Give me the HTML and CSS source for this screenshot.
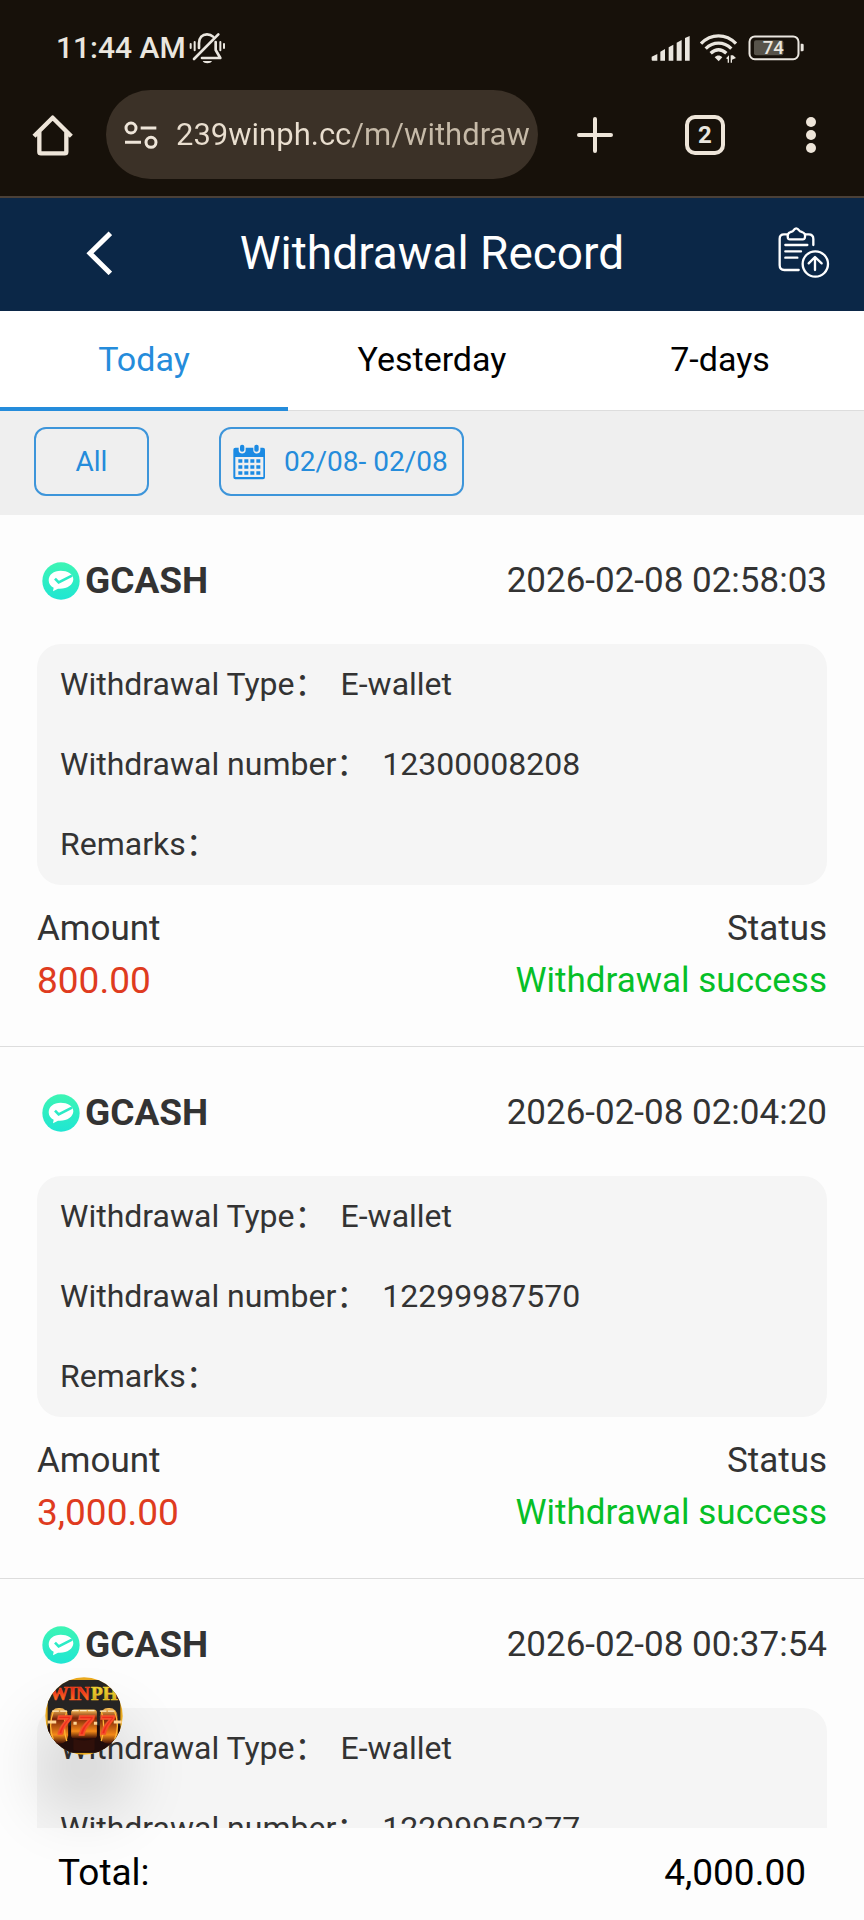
FILE: index.html
```html
<!DOCTYPE html>
<html lang="en">
<head>
<meta charset="utf-8">
<meta name="viewport" content="width=device-width, initial-scale=1">
<title>Withdrawal Record</title>
<link rel="stylesheet" href="styles.css">
</head>
<body class="app">
<svg class="defs" width="0" height="0" aria-hidden="true">
  <defs>
    <linearGradient id="mint" x1="0" y1="0" x2="0" y2="1"><stop offset="0" stop-color="#3df5b4"/><stop offset="1" stop-color="#1fe6d3"/></linearGradient>
    <symbol id="gcash" viewBox="0 0 114 114">
      <circle cx="57" cy="57" r="56" fill="url(#mint)"/>
      <path d="M56 26C35 26 20 38 20 55c0 11 6 18 15 22l-2 11 15-8c26 2 45-10 46-28 0-16-18-26-38-26z" fill="#fff"/>
      <path d="M39 50l11 11 40-20" fill="none" stroke="#2bebc6" stroke-width="8"/>
    </symbol>
  </defs>
</svg>

<div class="chrome">
  <div class="status">
    <span class="clock">11:44 AM</span>
    <svg class="bell" viewBox="564 94 114 96" width="38" height="32" fill="none" stroke="#eae6df" stroke-width="8" stroke-linecap="round" stroke-linejoin="round" aria-hidden="true">
      <path d="M597 142v-14c0-17 10-27 24-27 8 0 14 3 18 7M647 124v24l14 24H606M655 101l-73 74"/>
      <path d="M572 130v12M584 124v25M661 124v25M672 130v12" stroke-width="6"/>
      <path d="M608 181h28c-4 9-24 9-28 0z" fill="#eae6df" stroke="none"/>
    </svg>
    <svg class="signal" viewBox="654 100 120 84" width="40" height="28" fill="#eae6df" aria-hidden="true">
      <path d="M656 168l17-8v20h-14q-3 0-3-3zM682 153l14-8v35h-14zM707 140l14-8v48h-14zM731 126l15-8v62h-15zM756 112l14-6v74h-14z"/>
    </svg>
    <svg class="wifi" viewBox="798 97 117 93" width="39" height="31" fill="none" stroke="#eae6df" stroke-width="10" aria-hidden="true">
      <path d="M804 129c30-31 75-31 105 0M818 144c23-22 54-22 77 0M833 158c15-14 32-14 47 0"/>
      <path d="M845 170c7-7 16-7 23 0l-11 12z" fill="#eae6df" stroke="none"/>
      <path d="M879 173l9-9v22h-4v-10zM893 164v22h4v-9l12-5-9-8z" fill="#eae6df" stroke="none"/>
    </svg>
    <svg class="battery" viewBox="946 103 168 78" width="56" height="26" aria-hidden="true">
      <rect x="950.500" y="107.500" width="147" height="68" rx="16" fill="none" stroke="#eae6df" stroke-width="6"/>
      <rect x="964" y="119" width="88" height="45" rx="6" fill="#57534a"/>
      <path d="M1104 129h5q4 0 4 4v15q0 4-4 4h-5z" fill="#eae6df"/>
      <text x="1022" y="161" text-anchor="middle" class="battery-text">74</text>
    </svg>
  </div>
  <div class="toolbar">
    <button class="tool tool-home" aria-label="Home">
      <svg viewBox="96 340 126 126" width="42" height="42" fill="none" stroke="#eee5d9" stroke-width="13" stroke-linejoin="round" aria-hidden="true">
        <path d="M102 407l56-56 56 56M118 394v59q0 5 5 5h71q5 0 5-5v-59"/>
      </svg>
    </button>
    <label class="address">
      <svg viewBox="372 358 102 90" width="34" height="30" fill="none" stroke="#eee5d9" stroke-width="9" aria-hidden="true">
        <circle cx="393" cy="382" r="15"/><path d="M422 382h47M375 425h48"/><circle cx="453" cy="425" r="15"/>
      </svg>
      <input class="url" type="text" aria-label="Address" value="239winph.cc/m/withdraw">
    </label>
    <button class="tool tool-add" aria-label="New tab">
      <svg viewBox="0 0 36 36" width="36" height="36" stroke="#eee5d9" stroke-width="4" stroke-linecap="round" aria-hidden="true"><path d="M18 2v32M2 18h32"/></svg>
    </button>
    <button class="tool tool-tabs" aria-label="Open tabs"><span class="tab-count">2</span></button>
    <button class="tool tool-menu" aria-label="Menu">
      <svg viewBox="0 0 10 36" width="10" height="36" fill="#eee5d9" aria-hidden="true"><circle cx="5" cy="5" r="5"/><circle cx="5" cy="18" r="5"/><circle cx="5" cy="31" r="5"/></svg>
    </button>
  </div>
</div>

<header class="header">
  <button class="header-back" aria-label="Back">
    <svg viewBox="258 120 78 132" width="26" height="44" fill="none" stroke="#fff" stroke-width="15" aria-hidden="true"><path d="M331 127l-61 60 61 60"/></svg>
  </button>
  <h1 class="title">Withdrawal Record</h1>
  <button class="header-action" aria-label="Export record">
    <svg viewBox="1038 114 156 156" width="52" height="52" fill="none" stroke="#fff" stroke-width="7" stroke-linecap="round" stroke-linejoin="round" aria-hidden="true">
      <path d="M1064 136h-8q-13 0-13 13v80q0 14 14 14h43M1120 136h10q14 0 14 14v18"/>
      <path d="M1068 148q-4-15 8-19 7-1 8-4 8-14 18 0 1 3 8 4 13 4 8 19-1 3-5 3h-40q-4 0-5-3z"/>
      <path d="M1060 168h66M1060 187h47M1060 206h36"/>
      <circle cx="1150" cy="225" r="38"/>
      <path d="M1149 243v-37M1130 223l19-19 20 19"/>
    </svg>
  </button>
</header>

<nav class="tabs">
  <button class="tab tab-active">Today</button>
  <button class="tab">Yesterday</button>
  <button class="tab">7-days</button>
</nav>

<div class="filters">
  <button class="filter filter-all">All</button>
  <button class="filter filter-date">
    <svg viewBox="699 760 99 108" width="33" height="36" aria-hidden="true">
      <path fill="#1b8ae3" fill-rule="evenodd" d="M706 771h10v8c0 13 21 13 21 0v-8h23v8c0 13 21 13 21 0v-8h8q6 0 6 6v83q0 6-6 6h-83q-6 0-6-6v-83q0-6 6-6zM706 799v60h84v-60z"/>
      <rect x="720" y="762" width="13" height="21" rx="6" fill="#1b8ae3"/><rect x="763" y="762" width="13" height="21" rx="6" fill="#1b8ae3"/>
      <path d="M715 811h66M715 829h66M715 847h66" stroke="#1b8ae3" stroke-width="11" stroke-dasharray="12 6"/>
    </svg>
    <span>02/08- 02/08</span>
  </button>
</div>

<main class="list">
  <article class="record">
    <div class="record-head">
      <svg width="38" height="38" aria-hidden="true"><use href="#gcash"/></svg>
      <h2 class="wallet">GCASH</h2>
      <time class="date">2026-02-08 02:58:03</time>
    </div>
    <dl class="details">
      <div class="detail"><dt>Withdrawal Type：</dt><dd>E-wallet</dd></div>
      <div class="detail"><dt>Withdrawal number：</dt><dd>12300008208</dd></div>
      <div class="detail"><dt>Remarks：</dt><dd></dd></div>
    </dl>
    <div class="summary">
      <div class="summary-col"><span>Amount</span><span class="amount">800.00</span></div>
      <div class="summary-col summary-end"><span>Status</span><span class="success">Withdrawal success</span></div>
    </div>
  </article>
  <article class="record">
    <div class="record-head">
      <svg width="38" height="38" aria-hidden="true"><use href="#gcash"/></svg>
      <h2 class="wallet">GCASH</h2>
      <time class="date">2026-02-08 02:04:20</time>
    </div>
    <dl class="details">
      <div class="detail"><dt>Withdrawal Type：</dt><dd>E-wallet</dd></div>
      <div class="detail"><dt>Withdrawal number：</dt><dd>12299987570</dd></div>
      <div class="detail"><dt>Remarks：</dt><dd></dd></div>
    </dl>
    <div class="summary">
      <div class="summary-col"><span>Amount</span><span class="amount">3,000.00</span></div>
      <div class="summary-col summary-end"><span>Status</span><span class="success">Withdrawal success</span></div>
    </div>
  </article>
  <article class="record">
    <div class="record-head">
      <svg width="38" height="38" aria-hidden="true"><use href="#gcash"/></svg>
      <h2 class="wallet">GCASH</h2>
      <time class="date">2026-02-08 00:37:54</time>
    </div>
    <dl class="details">
      <div class="detail"><dt>Withdrawal Type：</dt><dd>E-wallet</dd></div>
      <div class="detail"><dt>Withdrawal number：</dt><dd>12299950377</dd></div>
    </dl>
  </article>
</main>

<footer class="total">
  <span>Total:</span>
  <span>4,000.00</span>
</footer>

<button class="float" aria-label="WINPH 777">
  <svg viewBox="42 48 236 236" width="78" height="78" aria-hidden="true">
    <defs>
      <linearGradient id="fire" x1="0" y1="0" x2="0" y2="1"><stop offset="0" stop-color="#c91818"/><stop offset=".5" stop-color="#f4411e"/><stop offset="1" stop-color="#ffa21f"/></linearGradient>
      <linearGradient id="gold" x1="0" y1="0" x2="0" y2="1"><stop offset="0" stop-color="#ffe83b"/><stop offset="1" stop-color="#c99a16"/></linearGradient>
      <linearGradient id="reel" x1="0" y1="0" x2="0" y2="1"><stop offset="0" stop-color="#ffc65a"/><stop offset=".3" stop-color="#7a2208"/><stop offset=".75" stop-color="#f58a18"/><stop offset="1" stop-color="#3a0e06"/></linearGradient>
      <clipPath id="disc"><circle cx="160" cy="166" r="117"/></clipPath>
    </defs>
    <g clip-path="url(#disc)">
      <rect x="42" y="48" width="236" height="236" fill="#e9a91f"/>
      <rect x="50" y="57" width="220" height="220" rx="40" fill="#262423"/>
      <path d="M50 195h220v82H50z" fill="#210c0a"/>
      <rect x="58" y="142" width="54" height="108" rx="25" fill="url(#reel)"/>
      <rect x="208" y="142" width="54" height="108" rx="25" fill="url(#reel)"/>
      <rect x="121" y="146" width="78" height="88" rx="10" fill="url(#reel)"/>
      <path d="M68 240q-18-45 0-90M108 242q-15-45 0-92M252 240q18-45 0-90M212 242q15-45 0-92" fill="none" stroke="#ffb735" stroke-width="4"/>
      <path d="M64 151h48M124 150h72M208 151h48" stroke="#ffe9bf" stroke-width="4" stroke-dasharray="20 4"/>
      <path d="M50 184h26M128 188h10M190 188h10M250 184h24" stroke="#ffd493" stroke-width="9"/>
      <path d="M128 234q32 12 64 0v34q-32 10-64 0z" fill="#30100a"/>
      <text x="178" y="118" text-anchor="end" class="logo-word" fill="url(#fire)" stroke="#f4511e">WIN</text>
      <text x="181" y="118" class="logo-word" fill="url(#gold)" stroke="#e8c42a">PH</text>
      <g class="logo-seven" text-anchor="middle"><text x="97" y="219">7</text><text x="227" y="219">7</text><text x="163" y="224" class="logo-seven-mid">7</text></g>
    </g>
  </svg>
</button>
</body>
</html>
```
FILE: styles.css
```css
* { box-sizing: border-box; }

.app {
  margin: 0;
  height: 100vh;
  display: flex;
  flex-direction: column;
  position: relative;
  overflow: hidden;
  background: #fdfdfd;
  color: #333;
  font-family: Roboto, "Noto Sans CJK SC", sans-serif;
  font-size: 35px;
}

.defs { position: absolute; }

button {
  margin: 0;
  padding: 0;
  border: 0;
  background: none;
  color: inherit;
  font: inherit;
}

svg { display: block; flex: none; }

/* Browser bars */
.chrome {
  flex: none;
  background: #17110a;
  color: #eae6df;
  border-bottom: 2px solid #4a4038;
}

.status {
  display: flex;
  align-items: center;
  height: 90px;
  padding: 6px 60px 0 56px;
}

.clock { font-size: 30px; font-weight: 500; line-height: 36px; }
.bell { margin-left: 2px; }
.signal { margin-left: auto; }
.wifi { margin-left: 8px; }
.battery { margin-left: 10px; }
.battery-text { font-size: 56px; font-weight: 500; fill: #eae6df; }

.toolbar { display: flex; height: 106px; }

.tool {
  flex: none;
  width: 106px;
  height: 89px;
  display: flex;
  align-items: center;
  justify-content: center;
}

.tool-add { width: 114px; }

.tab-count {
  width: 40px;
  height: 40px;
  border: 4px solid #eee5d9;
  border-radius: 10px;
  font-size: 24px;
  font-weight: 700;
  line-height: 32px;
  text-align: center;
}

.address {
  flex: 1;
  min-width: 0;
  height: 89px;
  display: flex;
  align-items: center;
  gap: 18px;
  padding: 0 8px 0 18px;
  border-radius: 45px;
  background: #3b3127;
}

.url {
  flex: 1;
  min-width: 0;
  padding: 0;
  border: 0;
  outline: 0;
  font: 400 31px/40px Roboto, sans-serif;
  color: transparent;
  background: linear-gradient(90deg, #e9decf 164px, #c6baa8 180px);
  -webkit-background-clip: text;
  background-clip: text;
}

/* Page header */
.header {
  flex: none;
  display: grid;
  grid-template-columns: 52px 1fr 52px;
  align-items: center;
  height: 113px;
  padding: 0 34px 4px 86px;
  background: #0b2747;
  color: #fff;
}

.header-back { justify-self: start; }
.header-action { justify-self: end; }

.title {
  margin: 0;
  padding-right: 52px;
  font-size: 46px;
  font-weight: 400;
  line-height: 56px;
  text-align: center;
}

.tabs {
  flex: none;
  display: grid;
  grid-template-columns: repeat(3, 1fr);
  height: 100px;
  border-bottom: 1px solid #ddd;
  background: #fff;
  color: #000;
}

.tab { height: 100px; border-bottom: 4px solid transparent; font-size: 34px; }
.tab-active { color: #258cdb; border-color: #258cdb; }

.filters {
  flex: none;
  display: flex;
  gap: 70px;
  height: 104px;
  padding: 16px 34px 0;
  background: #efefef;
}

.filter {
  height: 69px;
  border: 2px solid #3d95da;
  border-radius: 12px;
  color: #258cdb;
  font-size: 28px;
}

.filter-all { width: 115px; }

.filter-date {
  display: flex;
  align-items: center;
  gap: 18px;
  padding: 0 14px 0 12px;
}

/* Records */
.list { flex: 1; min-height: 0; overflow: hidden; }

.record { padding: 0 37px; border-bottom: 1px solid #ddd; }

.record-head {
  display: flex;
  align-items: center;
  gap: 5px;
  height: 129px;
  padding: 2px 0 0 5px;
}

.wallet { margin: 0; font-size: 37px; font-weight: 700; line-height: 44px; }
.date { margin-left: auto; line-height: 44px; }

.details {
  margin: 0;
  padding: 0 23px 1px;
  border-radius: 24px;
  background: #f5f5f5;
  font-size: 32px;
}

.detail {
  display: flex;
  gap: 14px;
  height: 80px;
  line-height: 80px;
}

.detail dd { margin: 0; }

.summary {
  display: flex;
  justify-content: space-between;
  height: 161px;
  padding-top: 18px;
  line-height: 52px;
}

.summary-col { display: flex; flex-direction: column; }
.summary-end { text-align: right; }
.amount { color: #df3b20; font-size: 37px; }
.success { color: #06bf27; }

.total {
  flex: none;
  display: flex;
  justify-content: space-between;
  align-items: center;
  height: 92px;
  padding: 0 58px 4px;
  background: #fdfdfd;
  color: #000;
  font-size: 37px;
}

.float {
  position: absolute;
  left: 45px;
  bottom: 165px;
  width: 78px;
  height: 78px;
  border-radius: 50%;
  box-shadow: 0 50px 70px rgba(0, 0, 0, 0.2);
}

.logo-word { font: 700 58px "Liberation Serif", serif; stroke-width: 2; }
.logo-seven { font: italic 700 76px "Liberation Sans", sans-serif; fill: #ed2a1c; stroke: #f4502c; stroke-width: 5; }
.logo-seven-mid { font-size: 86px; }
```
